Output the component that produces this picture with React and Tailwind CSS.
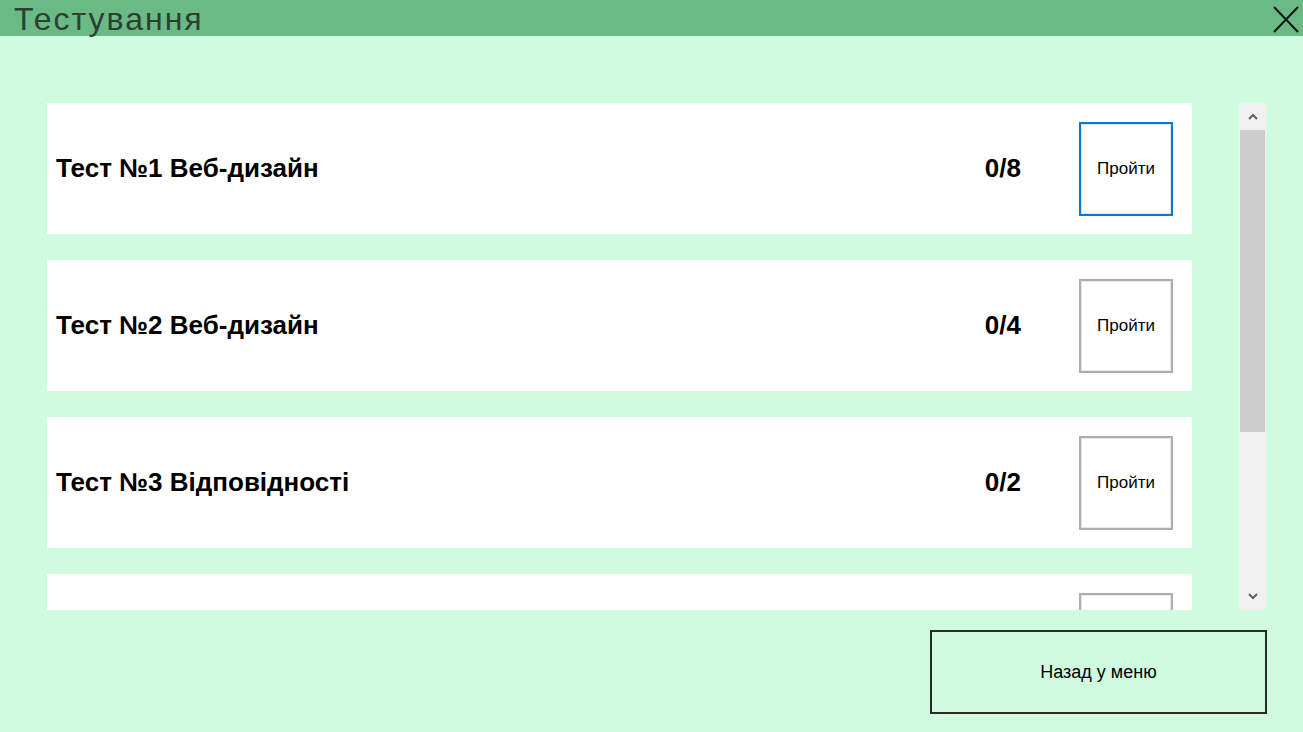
import React from "react";

const tests = [
  { title: "Тест №1 Веб-дизайн", score: "0/8", active: true },
  { title: "Тест №2 Веб-дизайн", score: "0/4" },
  { title: "Тест №3 Відповідності", score: "0/2" },
  { title: "", score: "", hidden: true },
];

export default function App() {
  return (
    <div
      className="w-[1303px] h-[732px] bg-[#CFFCE0] flex flex-col overflow-hidden"
      style={{ fontFamily: '"Liberation Sans", Arial, sans-serif' }}
    >
      <div className="h-[36px] bg-[#69BA85] flex items-center justify-between shrink-0">
        <span className="ml-[14px] text-[32px] tracking-[2px] leading-none text-[#2c3f31] mt-[2px]">Тестування</span>
        <svg width="30" height="30" viewBox="0 0 30 30" className="mr-[2px] mt-[1px]">
          <path d="M3 3 L27 28 M27 3 L3 28" stroke="#141414" strokeWidth="2" fill="none" />
        </svg>
      </div>

      <div className="flex pt-[67px] pl-[47px]">
        <div className="w-[1145px] h-[507px] overflow-hidden flex flex-col gap-[26px]">
          {tests.map((t, i) => (
            <div key={i} className="h-[131px] shrink-0 bg-white flex items-start pr-[19px]">
              <div className="flex-1 h-[131px] flex items-center pl-[9px]">
                <span className="text-[26px] font-bold text-black">{t.title}</span>
              </div>
              <div className="h-[131px] flex items-center mr-[58px]">
                <span className="text-[26px] font-bold text-black">{t.score}</span>
              </div>
              <div className="pt-[19px]">
                <button
                  className={
                    "w-[94px] h-[94px] bg-white flex items-center justify-center text-[17px] text-black border-2 " +
                    (t.active
                      ? "border-[#0078D7] shadow-[inset_0_0_0_1px_#e5e5e5]"
                      : "border-[#ADADAD] shadow-[inset_0_0_0_1px_#e8e8e8]")
                  }
                >
                  {t.hidden ? "" : "Пройти"}
                </button>
              </div>
            </div>
          ))}
        </div>

        <div className="ml-[47px] w-[27px] h-[507px] bg-[#F0F0F0] flex flex-col">
          <div className="h-[27px] flex items-center justify-center">
            <svg width="10" height="7" viewBox="0 0 10 7">
              <path d="M1 6 L5 2 L9 6" stroke="#606060" strokeWidth="2" fill="none" />
            </svg>
          </div>
          <div className="h-[302px] mx-[1px] bg-[#CDCDCD]" />
          <div className="flex-1" />
          <div className="h-[27px] flex items-center justify-center">
            <svg width="10" height="7" viewBox="0 0 10 7">
              <path d="M1 1 L5 5 L9 1" stroke="#606060" strokeWidth="2" fill="none" />
            </svg>
          </div>
        </div>
      </div>

      <div className="mt-[20px] ml-[930px]">
        <button className="w-[337px] h-[84px] border-2 border-[#2a2a2a] bg-transparent flex items-center justify-center text-[18px] text-black">
          Назад у меню
        </button>
      </div>
    </div>
  );
}
